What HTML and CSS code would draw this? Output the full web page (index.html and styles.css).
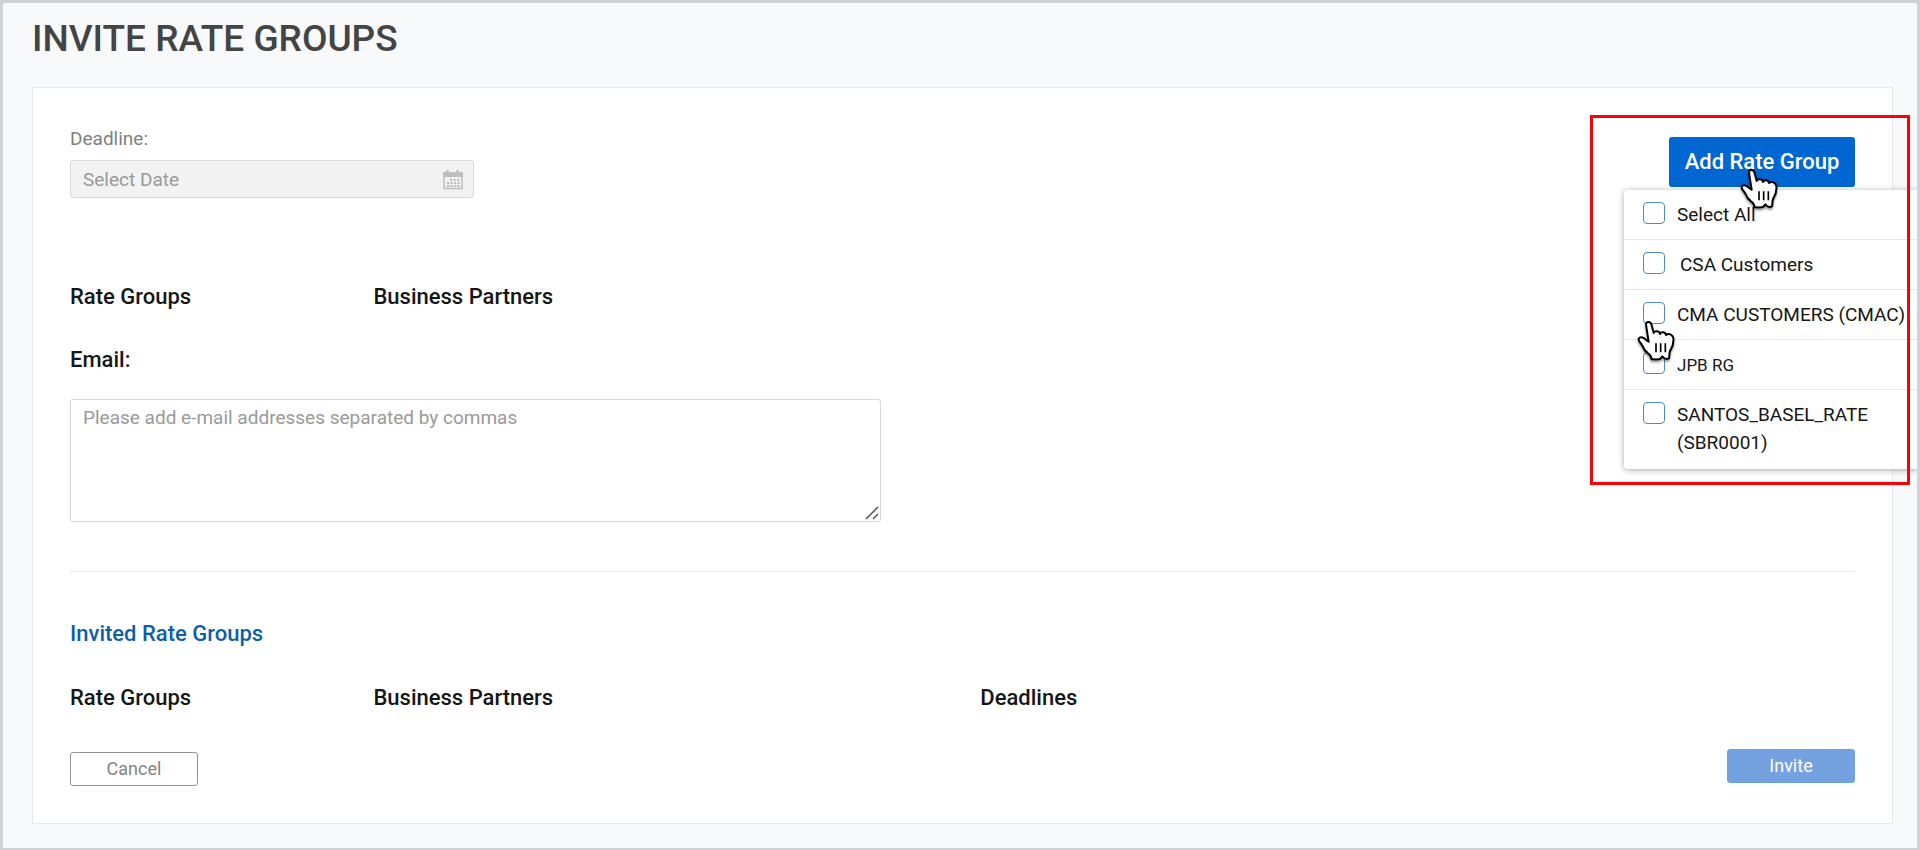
FILE: index.html
```
<!DOCTYPE html>
<html lang="en">
<head>
<meta charset="utf-8">
<title>Invite Rate Groups</title>
<link rel="stylesheet" href="styles.css">
</head>
<body>
<svg class="defs" aria-hidden="true">
  <symbol id="hand" viewBox="48 60 120 126">
    <path d="M78 74C77 64 91 63 94 73L101 99C104 91 119 92 120 102C124 93 137 96 138 105C146 98 158 104 160 114C162 132 157 142 151 151C147 158 149 167 147 175C141 178 136 177 132 174L127 169L120 177C112 179 103 178 95 178C94 170 91 164 84 160C74 153 70 145 67 137C63 128 53 122 56 116C61 108 72 113 80 121L86 125Z" fill="#fff" stroke="#000" stroke-width="6" stroke-linejoin="round"/>
    <path d="M108 130V157M122 130V157M136 130V157" fill="none" stroke="#000" stroke-width="5"/>
  </symbol>
</svg>
<div class="page">
  <h1 class="title">INVITE RATE GROUPS</h1>
  <main class="panel">
    <div class="top">
      <div class="deadline">
        <label class="deadline-label" for="deadline">Deadline:</label>
        <div class="date-field">
          <input class="date-input" id="deadline" type="text" placeholder="Select Date" disabled>
          <svg class="calendar" viewBox="0 0 20 20" aria-hidden="true">
            <path d="M1 3H19V18.500H1Z" fill="none" stroke="#bdbdbd" stroke-width="1.500"/>
            <path d="M0 2H3V4H6V2H13V4H16V2H20V7H0Z" fill="#bdbdbd"/>
            <path d="M4.500 0.500V3.500M14.500 0.500V3.500" stroke="#bdbdbd" stroke-width="2.500" stroke-linecap="round"/>
            <path d="M7 10H17M4 13H17M4 16H17" stroke="#bdbdbd" stroke-width="2" stroke-dasharray="2.200 1.300"/>
          </svg>
        </div>
      </div>
      <div class="picker">
        <button class="add" type="button" aria-expanded="true">Add Rate Group</button>
        <div class="menu">
          <label class="option"><input class="check" type="checkbox"><span>Select All</span></label>
          <label class="option"><input class="check" type="checkbox"><span class="nested">CSA Customers</span></label>
          <label class="option"><input class="check" type="checkbox"><span>CMA CUSTOMERS (CMAC)</span></label>
          <label class="option"><input class="check" type="checkbox"><span class="compact">JPB RG</span></label>
          <label class="option"><input class="check" type="checkbox"><span>SANTOS_BASEL_RATE (SBR0001)</span></label>
        </div>
        <svg class="hand hand-button" aria-hidden="true"><use href="#hand"/></svg>
        <svg class="hand hand-option" aria-hidden="true"><use href="#hand"/></svg>
        <div class="highlight"></div>
      </div>
    </div>

    <table class="groups">
      <thead><tr><th class="col-group">Rate Groups</th><th class="col-partner">Business Partners</th><th></th></tr></thead>
    </table>

    <label class="email-label" for="email">Email:</label>
    <div class="email-field">
      <textarea class="email" id="email" placeholder="Please add e-mail addresses separated by commas"></textarea>
      <svg class="grip" viewBox="0 0 14 14" aria-hidden="true"><path d="M1 13L13 1M8 13L13 8" fill="none" stroke="#555" stroke-width="1.500"/></svg>
    </div>

    <hr class="divider">

    <h2 class="invited">Invited Rate Groups</h2>
    <table class="groups">
      <thead><tr><th class="col-group">Rate Groups</th><th class="col-partner">Business Partners</th><th>Deadlines</th></tr></thead>
    </table>

    <div class="actions">
      <button class="btn cancel" type="button">Cancel</button>
      <button class="btn invite" type="button" disabled>Invite</button>
    </div>
  </main>
</div>
</body>
</html>
```
FILE: styles.css
```
* { box-sizing: border-box; }

body {
  margin: 0;
  font-family: Roboto, "Liberation Sans", sans-serif;
  font-size: 19px;
  line-height: 28px;
  color: #161616;
}

button, input, textarea { font: inherit; }

.defs { position: absolute; width: 0; height: 0; }

.page {
  min-height: 100vh;
  padding: 14px 24px 24px 29px;
  border: 3px solid #d0d3d5;
  background: #f7f9fb;
  overflow: hidden;
}

.title {
  margin: 0 0 26px;
  font-size: 37px;
  line-height: 44px;
  font-weight: 500;
  color: #444;
}

.panel {
  padding: 41px 37px 37px;
  border: 1px solid #e6e8ea;
  background: #fff;
}

.top {
  display: flex;
  justify-content: space-between;
  align-items: flex-start;
  margin-bottom: 87px;
}

.deadline { width: 404px; }

.deadline-label {
  display: block;
  margin-bottom: 11px;
  line-height: 20px;
  color: #808080;
}

.date-field { position: relative; }

.date-input {
  display: block;
  width: 100%;
  height: 38px;
  padding: 0 44px 0 12px;
  border: 1px solid #d9dadb;
  border-radius: 3px;
  background: #f2f2f2;
}

.date-input::placeholder, .email::placeholder { color: #999; opacity: 1; }

.calendar {
  position: absolute;
  top: 10px;
  right: 11px;
  width: 20px;
  height: 20px;
}

.picker { position: relative; margin-top: 8px; }

.add {
  display: block;
  width: 186px;
  height: 50px;
  padding: 0;
  border: 0;
  border-radius: 3px;
  background: #0066d2;
  color: #fff;
  font-size: 22px;
  font-weight: 500;
}

.menu {
  position: absolute;
  top: 53px;
  right: -62px;
  width: 293px;
  border-radius: 4px 0 0 4px;
  background: #fff;
  box-shadow: 0 1px 6px rgba(0, 0, 0, 0.35);
}

.option {
  display: flex;
  align-items: flex-start;
  gap: 12px;
  padding: 11px 5px 10px 19px;
}

.option:last-child { padding-bottom: 12px; }

.option + .option { border-top: 1px solid #e8e8e8; }

.check {
  appearance: none;
  flex: none;
  width: 22px;
  height: 22px;
  margin: 1px 0 0;
  border: 1px solid #4f8ac4;
  border-radius: 4px;
  background: #fff;
}

.nested { padding-left: 3px; }

.compact { font-size: 17px; }

.hand {
  position: absolute;
  width: 40px;
  height: 42px;
  pointer-events: none;
  filter: drop-shadow(0 2px 1px rgba(0, 0, 0, 0.4));
}

.hand-button { top: 31px; left: 70px; }
.hand-option { top: 183px; left: -33px; }

.highlight {
  position: absolute;
  top: -22px;
  left: -79px;
  width: 320px;
  height: 370px;
  border: 3px solid #fb0007;
  pointer-events: none;
}

.groups {
  width: 100%;
  table-layout: fixed;
  border-collapse: collapse;
  margin-bottom: 39px;
}

.groups th, .email-label, .invited {
  padding: 0;
  text-align: left;
  font-size: 22px;
  line-height: 24px;
  font-weight: 500;
}

.col-group { width: 17%; }
.col-partner { width: 34%; }

.email-label { display: block; margin-bottom: 27px; }

.email-field { position: relative; width: 811px; max-width: 100%; }

.email {
  display: block;
  width: 100%;
  height: 123px;
  padding: 4px 12px;
  border: 1px solid #d4d6d8;
  border-radius: 3px;
  background: #fff;
  resize: none;
}

.grip {
  position: absolute;
  right: 2px;
  bottom: 2px;
  width: 14px;
  height: 14px;
  pointer-events: none;
}

.divider { margin: 49px 0 50px; border: 0; border-top: 1px solid #e8e8e8; }

.invited { margin: 0 0 40px; color: #0d5fa8; }

.actions { display: flex; justify-content: space-between; height: 37px; }

.btn {
  width: 128px;
  height: 34px;
  padding: 0;
  border-radius: 3px;
  font-size: 18px;
}

.cancel {
  align-self: flex-end;
  border: 1px solid #939393;
  background: #fff;
  color: #848484;
}

.invite { border: 1px solid #6e9fe3; background: #74a2e0; color: #fff; }
```
